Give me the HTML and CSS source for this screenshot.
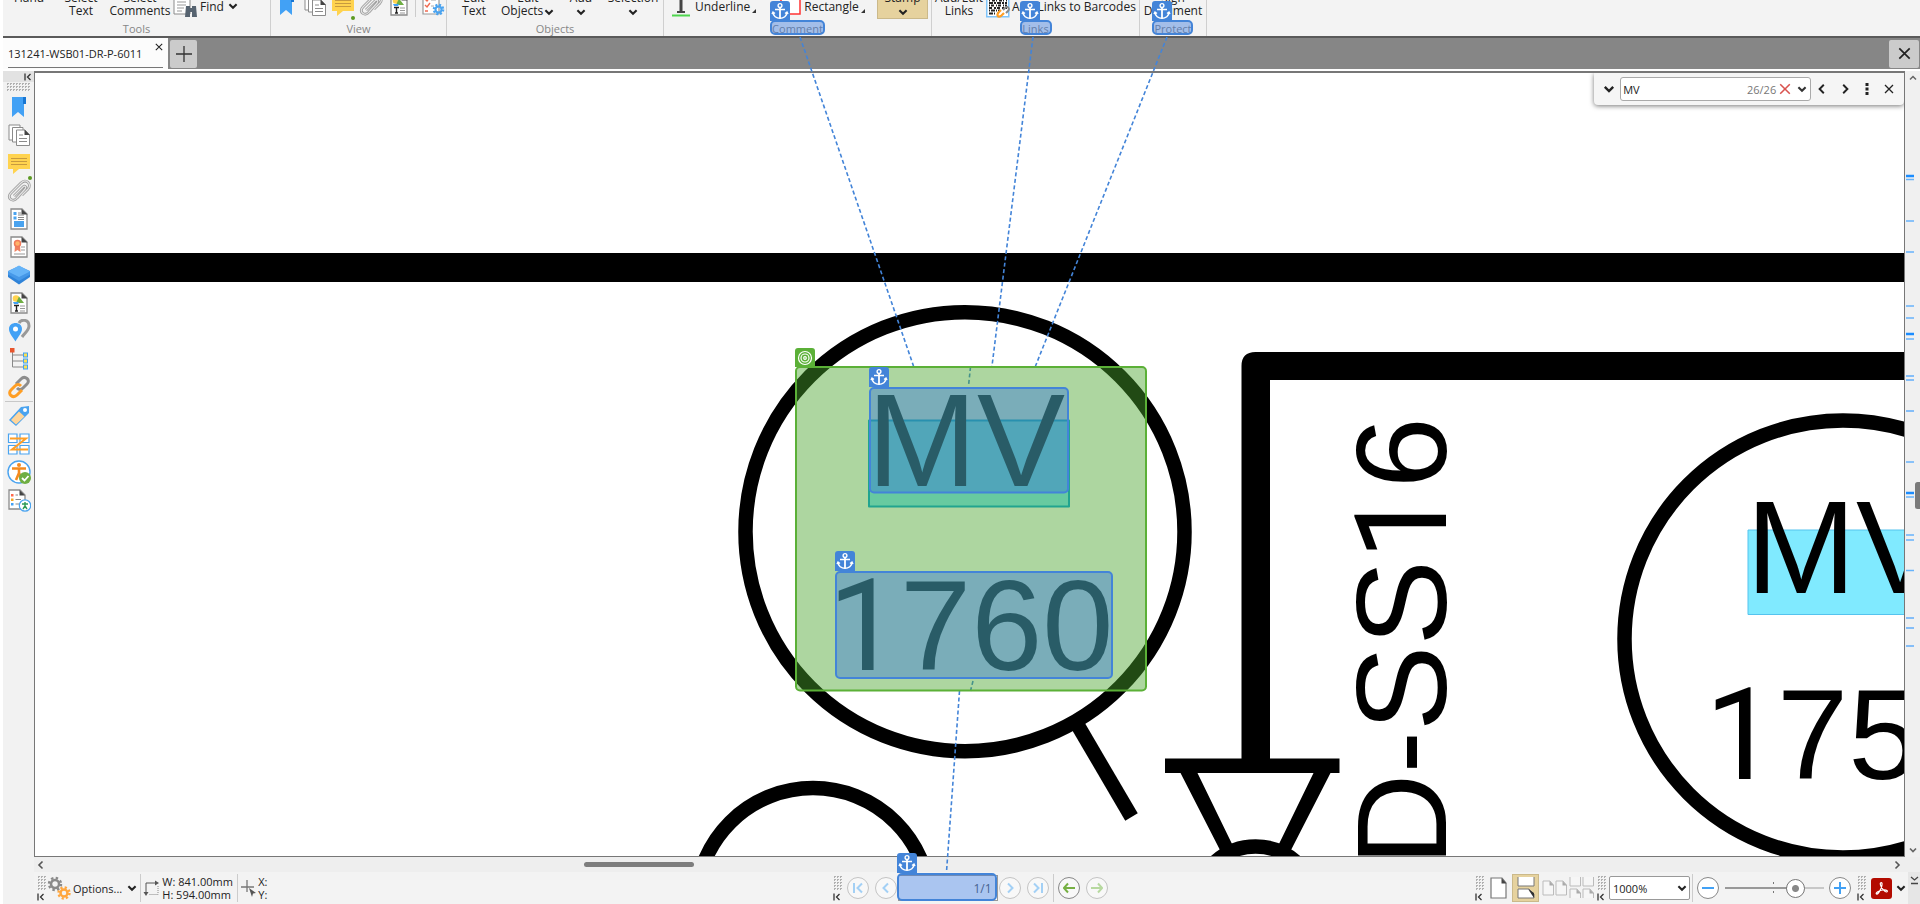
FILE: index.html
```html
<!DOCTYPE html>
<html lang="en">
<head>
<meta charset="utf-8">
<title>131241-WSB01-DR-P-6011</title>
<link rel="stylesheet" href="styles.css">
</head>
<body>
<svg class="defs" aria-hidden="true">
  <defs>
    <symbol id="chev-down" viewBox="0 0 10 10"><path d="M2 3.5 5 6.5 8 3.5" fill="none" stroke="currentColor" stroke-width="1.7"/></symbol>
    <symbol id="chev-up" viewBox="0 0 10 10"><path d="M2 6.500 5 3.500 8 6.500" fill="none" stroke="currentColor" stroke-width="1.5"/></symbol>
    <symbol id="chev-left" viewBox="0 0 10 10"><path d="M6.500 1.500 3 5 6.500 8.500" fill="none" stroke="currentColor" stroke-width="1.600"/></symbol>
    <symbol id="chev-right" viewBox="0 0 10 10"><path d="M3.500 1.500 7 5 3.500 8.500" fill="none" stroke="currentColor" stroke-width="1.600"/></symbol>
    <symbol id="cross" viewBox="0 0 10 10"><path d="M1 1 9 9M9 1 1 9" fill="none" stroke="currentColor" stroke-width="1.300"/></symbol>
    <symbol id="collapse" viewBox="0 0 8 8"><path d="M1 .5V7.500M6.500 1 3.500 4 6.500 7" fill="none" stroke="#333" stroke-width="1.300"/></symbol>
    <symbol id="i-bookmark" viewBox="0 0 24 24"><path d="M5 2H17V22L11 17 5 22Z" fill="#42a1f5"/><path d="M16 2H19V9H16Z" fill="#1976d2"/></symbol>
    <symbol id="i-pages" viewBox="0 0 24 24"><g fill="#fff" stroke="#8b8b8b"><path d="M2 2H13V17H2Z"/><path d="M5.500 4.500H16V19H5.500Z"/><path d="M9.500 7H18L22.500 12V22.500H9.500Z"/><path d="M12 12H16M12 15.500H20M12 18.500H20"/></g><path d="M17.500 6.500V12H23Z" fill="#444"/></symbol>
    <symbol id="i-note" viewBox="0 0 24 24"><path d="M1 3H23V18H12L6 23V18H1Z" fill="#ffd34f"/><path d="M4 7.500H20M4 10.500H20M4 13.500H20" stroke="#c79a3f" stroke-width="1"/></symbol>
    <symbol id="i-clip" viewBox="0 0 24 24"><path d="M7 17 16 8C17.500 6 20 8 18 10L10 19C6 24-1 19 4 14L14 4C19-1 25 5 21 10L15 16" fill="none" stroke="#999" stroke-width="2.800"/><path d="M7 17 16 8C17.500 6 20 8 18 10L10 19C6 24-1 19 4 14L14 4C19-1 25 5 21 10L15 16" fill="none" stroke="#e4e4e4" stroke-width="1.200"/></symbol>
    <symbol id="i-doc" viewBox="0 0 24 24"><path d="M4 2H15L20 7V22H4Z" fill="#fff" stroke="#8b8b8b" stroke-width="1.300"/><path d="M14.500 2V7.500H20.500Z" fill="#444"/></symbol>
    <symbol id="i-content" viewBox="0 0 24 24"><use href="#i-doc"/><path d="M6.500 5H9.500V8H6.500ZM6.500 9.500H9.500V12.500H6.500ZM7 14H17V20H7Z" fill="#4aa3ef"/><path d="M11 6H14M11 8H17M11 10.500H17M11 12.500H17" stroke="#888"/></symbol>
    <symbol id="i-cert" viewBox="0 0 24 24"><use href="#i-doc"/><path d="M8 10 7.500 17 10.500 15 13.500 17 13 10Z" fill="#f08060"/><circle cx="10.500" cy="8.500" r="3" fill="#ffb36b" stroke="#f07a5a" stroke-width="1.500"/><path d="M14 12H18M14 15H18M7 19H18" stroke="#999"/></symbol>
    <symbol id="i-layers" viewBox="0 0 24 24"><path d="M1 14 12 21.500 23 14V9L12 4 1 9Z" fill="#2f83d8"/><path d="M1 11.500 12 18 23 11.500V8L12 3 1 8Z" fill="#4698e8"/><path d="M1 8.500 12 2.500 23 8.500 12 14Z" fill="#66b4f8"/></symbol>
    <symbol id="i-textdoc" viewBox="0 0 24 24"><use href="#i-doc"/><circle cx="9" cy="7.500" r="3.300" fill="#ffd34f"/><path d="M12 5.500 17 12H9Z" fill="#6fae43"/><path d="M6 11H12L11 13H7Z" fill="#42a1f5"/><path d="M7 14.500H12M9.500 14.500V20M8 20H11" stroke="#222" stroke-width="1.400"/><path d="M13 15H18M13 17.500H18M13 20H18" stroke="#999"/></symbol>
    <symbol id="i-pin" viewBox="0 0 24 24"><path d="M12 4C14 0 22 0 22 7 22 11 18 14 15 18" fill="none" stroke="#999" stroke-width="3"/><path d="M8.500 22.500C5 17 2 14 2 10 2 2 15 2 15 10 15 14 11 18 8.500 22.500Z" fill="#42a1f5"/><circle cx="8.500" cy="10" r="2.500" fill="#fff"/></symbol>
    <symbol id="i-tree" viewBox="0 0 24 24"><path d="M5.500 5V20H17M5.500 8H17M5.500 14H17" fill="none" stroke="#888"/><rect x="3" y="1" width="4.500" height="4.500" fill="#e8552d"/><g fill="#ffe14f" stroke="#42a1f5"><rect x="16.500" y="6" width="4" height="4"/><rect x="16.500" y="12" width="4" height="4"/><rect x="16.500" y="18" width="4" height="4"/></g></symbol>
    <symbol id="i-chain" viewBox="0 0 24 24"><path d="M9 9 14 4C18 0 24 5 20 9L16 13C14 15 12 15 10 13" fill="none" stroke="#8d8d8d" stroke-width="3"/><path d="M15 15 10 20C6 24 0 19 4 15L8 11C10 9 12 9 14 11" fill="none" stroke="#ff9e24" stroke-width="3"/></symbol>
    <symbol id="i-tag" viewBox="0 0 24 24"><path d="M2 16 14 3 22 2 22 9 9 22Z" fill="#4aa3ef"/><path d="M4 16 12 7.500 17.500 12.500 9 20.500Z" fill="#ffd59a"/><circle cx="18" cy="6" r="2" fill="#fff"/></symbol>
    <symbol id="i-order" viewBox="0 0 24 24"><g fill="#fff" stroke="#4aa3ef" stroke-width="1.200"><path d="M1.500 2H10V10.500H1.500ZM13 2H22V10.500H13ZM1.500 13.500H10V22H1.500ZM13 13.500H22V22H13Z"/></g><path d="M3 6.500H19L5 17.500H21" fill="none" stroke="#ff9e24" stroke-width="2"/></symbol>
    <symbol id="i-access" viewBox="0 0 24 24"><circle cx="12" cy="12" r="11" fill="#fff" stroke="#4aa3ef" stroke-width="1.400"/><circle cx="12" cy="5" r="2" fill="#f58a1f"/><path d="M5 8.500H19M12 9V14M12 13 9 20M12 13 15 20" stroke="#f58a1f" stroke-width="2.600" fill="none"/><circle cx="18" cy="18" r="6" fill="#6fae43"/><path d="M15 18 17.500 20.500 21.500 16" fill="none" stroke="#fff" stroke-width="1.800"/></symbol>
    <symbol id="i-report" viewBox="0 0 24 24"><path d="M2 2H13L18 7V21H2Z" fill="#fff" stroke="#8b8b8b" stroke-width="1.300"/><path d="M12.500 2V7.500H18Z" fill="#444"/><path d="M4 6H6.500V8.500H4Z" fill="#ff6a4d"/><path d="M4 10.500H6.500V13H4Z" fill="#f5a623"/><path d="M4 15H6.500V17.500H4Z" fill="#42a1f5"/><path d="M8.500 7H11M8.500 11.500H14M8.500 16H12" stroke="#888"/><circle cx="18" cy="17.500" r="5.700" fill="#fff" stroke="#4aa3ef" stroke-width="1.200"/><path d="M15 16H21M18 14V18L16 21M18 18 20 21" stroke="#2d9a55" stroke-width="1.400" fill="none"/></symbol>
    <symbol id="i-gearlist" viewBox="0 0 24 24"><path d="M2 0H13L18 5V21H2Z" fill="#fff" stroke="#999" stroke-width="1.200"/><path d="M4 6 6 8 9 4M4 12 6 14 9 10M4 18H7" fill="none" stroke="#f06a50" stroke-width="1.400"/><path d="M10 7H15M10 13H13" stroke="#aaa"/><circle cx="17.500" cy="16.500" r="4.700" fill="none" stroke="#4aa3ef" stroke-width="2.200" stroke-dasharray="2 1.690"/><circle cx="17.500" cy="16.500" r="3" fill="none" stroke="#4aa3ef" stroke-width="2"/></symbol>
    <symbol id="i-find" viewBox="0 0 24 24"><path d="M1 0H12L17 5V20H1Z" fill="#fff" stroke="#8b8b8b"/><path d="M4 8H13M4 11H13M4 14H11M4 17H9" stroke="#999"/><path d="M13 12H17V14H19V12H23L24 23H19V18H17V23H12Z" fill="#566370"/></symbol>
    <symbol id="i-underline" viewBox="0 0 24 24"><path d="M5 1H19V6H17V3H13.500V17H16V19H8V17H10.500V3H7V6H5Z" fill="#444"/><path d="M3 21.500H21" stroke="#4fd64f" stroke-width="2"/></symbol>
    <symbol id="i-rect" viewBox="0 0 24 24"><path d="M3 1H22V20H3Z" fill="#fff" stroke="#f33" stroke-width="1.500"/></symbol>
    <symbol id="i-qr" viewBox="0 0 24 24"><rect x=".75" y=".75" width="22" height="22" fill="#fff" stroke="#7fc4fa" stroke-width="1.500"/><g stroke="#222" fill="none" stroke-width="2"><path d="M3 4H21" stroke-dasharray="3 1 1 2"/><path d="M3 6.500H21" stroke-dasharray="1 2 3 1"/><path d="M3 9H21" stroke-dasharray="4 1 2 1"/><path d="M3 11.500H21" stroke-dasharray="1 1 3 2"/><path d="M3 14H21" stroke-dasharray="3 2 2 1"/><path d="M3 16.500H14" stroke-dasharray="1 1 4 1"/><path d="M3 19.500H12" stroke-dasharray="4 1 1 2"/></g><path d="M17 16 20 13C22 12 24 15 22 17L20 19" fill="none" stroke="#888" stroke-width="2"/><path d="M18 19 15 22C12 24 10 21 13 18L15 16" fill="none" stroke="#ff9e24" stroke-width="2.200"/></symbol>
    <symbol id="i-gears" viewBox="0 0 24 24"><circle cx="8" cy="8" r="6" fill="none" stroke="#8a8a8a" stroke-width="2.400" stroke-dasharray="2.400 2.310"/><circle cx="8" cy="8" r="4" fill="none" stroke="#8a8a8a" stroke-width="2.500"/><circle cx="17" cy="17" r="5.500" fill="none" stroke="#ffa63d" stroke-width="2.400" stroke-dasharray="2.200 2.120"/><circle cx="17" cy="17" r="3.500" fill="none" stroke="#ffa63d" stroke-width="2.500"/></symbol>
    <symbol id="i-size" viewBox="0 0 18 18"><path d="M3 14V4H13" fill="none" stroke="#555"/><path d="M12 1.500 16 4 12 6.500ZM.5 13 3 17 5.500 13Z" fill="#555"/><path d="M15 7V15.500H6" fill="none" stroke="#888" stroke-dasharray="1 1"/></symbol>
    <symbol id="i-cursor" viewBox="0 0 18 18"><path d="M7 1V13M1 8H14" stroke="#777" stroke-width="1.300"/><path d="M9 9 16 14 13 14.500 12 18Z" fill="#555"/></symbol>
    <symbol id="v-single" viewBox="0 0 24 24"><path d="M4 2H15L19 7V22H4Z" fill="#fff" stroke="#777" stroke-width="1.200"/><path d="M14.500 2V7.500H19.500Z" fill="#444"/></symbol>
    <symbol id="v-cont" viewBox="0 0 24 24"><path d="M4 1V10H20V1" fill="#fff" stroke="#777"/><path d="M4 22V13H15L20 18V22Z" fill="#fff" stroke="#777"/><path d="M14 13 20 22V17Z" fill="#333"/></symbol>
    <symbol id="v-two" viewBox="0 0 26 24"><g fill="#f6f6f6" stroke="#bbb"><path d="M1 5H8L11.500 9V19H1Z"/><path d="M14 5H21L24.500 9V19H14Z"/></g><path d="M7.500 5V9.500H12ZM20.500 5V9.500H25Z" fill="#aaa"/></symbol>
    <symbol id="v-four" viewBox="0 0 26 24"><g fill="#f6f6f6" stroke="#bbb"><path d="M1 1V10H11.500V1M14 1V10H24.500V1M1 22V13H8L11.500 17V22M14 22V13H21L24.500 17V22"/></g><path d="M7.500 13V17.500H12ZM20.500 13V17.500H25Z" fill="#aaa"/></symbol>
    <symbol id="i-anchor" viewBox="0 0 20 20"><path d="M0 20V3Q0 0 3 0H17Q20 0 20 3V20Z" fill="#4384d8"/><g fill="none" stroke="#fff" stroke-width="1.400"><circle cx="10" cy="4.500" r="1.900"/><path d="M5 8.500H15M3 11C3 19.500 17 19.500 17 11M2 13 3 11 5 12.500M18 13 17 11 15 12.500"/><path d="M10 6.500V17.500" stroke-width="1.800"/></g></symbol>
  </defs>
</svg>

<div class="app">
  <header class="ribbon">
    <section class="group g-tools">
      <div class="items">
        <button class="big w-52">Hand<br>&nbsp;</button>
        <button class="big w-52">Select<br>Text</button>
        <button class="big w-66">Select<br>Comments</button>
        <button class="inline"><svg class="ic"><use href="#i-find"/></svg>Find<svg class="chev"><use href="#chev-down"/></svg></button>
      </div>
      <h2>Tools</h2>
    </section>
    <section class="group g-view">
      <div class="items icons">
        <button class="icon" aria-label="Bookmarks"><svg class="ic"><use href="#i-bookmark"/></svg></button>
        <button class="icon" aria-label="Thumbnails"><svg class="ic"><use href="#i-pages"/></svg></button>
        <button class="icon dot" aria-label="Comments"><svg class="ic"><use href="#i-note"/></svg></button>
        <button class="icon" aria-label="Attachments"><svg class="ic"><use href="#i-clip"/></svg></button>
        <button class="icon" aria-label="Content"><svg class="ic"><use href="#i-textdoc"/></svg></button>
        <button class="icon split" aria-label="Panes"><svg class="ic"><use href="#i-gearlist"/></svg></button>
      </div>
      <h2>View</h2>
    </section>
    <section class="group g-objects">
      <div class="items">
        <button class="big w-54">Edit<br>Text</button>
        <button class="big w-54">Edit<br>Objects<svg class="chev"><use href="#chev-down"/></svg></button>
        <button class="big w-52">Add<br><svg class="chev"><use href="#chev-down"/></svg></button>
        <button class="big w-52">Selection<br><svg class="chev"><use href="#chev-down"/></svg></button>
      </div>
      <h2>Objects</h2>
    </section>
    <section class="group g-comment">
      <div class="items">
        <button class="inline"><svg class="ic"><use href="#i-underline"/></svg>Underline<i class="tick"></i></button>
        <button class="inline rect"><svg class="ic"><use href="#i-rect"/></svg>Rectangle<i class="tick"></i></button>
        <button class="big stamp">Stamp<br><svg class="chev"><use href="#chev-down"/></svg></button>
      </div>
      <h2>Comment</h2>
    </section>
    <section class="group g-links">
      <div class="items">
        <button class="big w-54">Add/Edit<br>Links</button>
        <button class="inline"><svg class="ic"><use href="#i-qr"/></svg>Add Links to Barcodes</button>
      </div>
      <h2>Links</h2>
    </section>
    <section class="group g-protect">
      <div class="items"><button class="big w-66">Sign<br>Document</button></div>
      <h2>Protect</h2>
    </section>
  </header>

  <nav class="tabs">
    <div class="tab"><a href="#drawing">131241-WSB01-DR-P-6011</a><button aria-label="Close tab"><svg class="s8"><use href="#cross"/></svg></button></div>
    <button class="sq add" aria-label="New tab"><svg viewBox="0 0 16 16" width="16" height="16"><path d="M8 0V16M0 8H16" stroke="#333" stroke-width="1.300"/></svg></button>
    <button class="sq close" aria-label="Close"><svg width="13" height="13"><use href="#cross"/></svg></button>
  </nav>

  <div class="body">
    <aside class="side">
      <div class="side-head"><svg class="fold"><use href="#collapse"/></svg></div>
      <div class="grip-h"></div>
      <button aria-label="Bookmarks"><svg class="ic"><use href="#i-bookmark"/></svg></button>
      <button aria-label="Thumbnails"><svg class="ic"><use href="#i-pages"/></svg></button>
      <button class="dot" aria-label="Comments"><svg class="ic"><use href="#i-note"/></svg></button>
      <button aria-label="Attachments"><svg class="ic"><use href="#i-clip"/></svg></button>
      <button aria-label="Fields"><svg class="ic"><use href="#i-content"/></svg></button>
      <button aria-label="Signatures"><svg class="ic"><use href="#i-cert"/></svg></button>
      <button aria-label="Layers"><svg class="ic"><use href="#i-layers"/></svg></button>
      <button aria-label="Content"><svg class="ic"><use href="#i-textdoc"/></svg></button>
      <button aria-label="Destinations"><svg class="ic"><use href="#i-pin"/></svg></button>
      <button aria-label="Structure"><svg class="ic"><use href="#i-tree"/></svg></button>
      <button aria-label="Links"><svg class="ic"><use href="#i-chain"/></svg></button>
      <hr>
      <button aria-label="Tags"><svg class="ic"><use href="#i-tag"/></svg></button>
      <button aria-label="Order"><svg class="ic"><use href="#i-order"/></svg></button>
      <button aria-label="Accessibility"><svg class="ic"><use href="#i-access"/></svg></button>
      <button aria-label="Report"><svg class="ic"><use href="#i-report"/></svg></button>
    </aside>

    <div class="work">
      <div class="view">
        <main class="canvas" id="drawing">
          <svg class="sheet" viewBox="35 73 1869 783" preserveAspectRatio="xMinYMin slice">
            <rect x="34" y="253" width="1900" height="29"/>
            <path d="M1241.500 765V366Q1241.500 352 1255.500 352H1920V380H1270V765Z"/>
            <path d="M1165 758.500H1339.500V773H1165Z"/>
            <path d="M1180 772H1197L1233 846 1221 852ZM1331 772H1314L1278 846 1290 852Z"/>
            <g class="ring">
              <circle cx="965" cy="531.700" r="219.500"/>
              <circle cx="1843" cy="639" r="218.500"/>
              <circle cx="813" cy="905" r="117"/>
              <circle cx="1255.600" cy="907" r="60.500"/>
              <path d="M1077 724 1131.500 817"/>
            </g>
            <path d="M1686 783 1692 788V794H1698L1690 802Z"/>
            <path class="hit current" d="M869 420.500H1069V506.500H869Z"/>
            <path class="hit" d="M1748 530H1925V614.500H1748Z"/>
            <text class="cad" x="867" y="485.500">MV</text>
            <text class="cad num" x="828" y="670"><tspan class="one">1</tspan>760</text>
            <text class="cad" x="1746" y="593">MV</text>
            <text class="cad num" x="1705" y="779"><tspan class="one">1</tspan>75</text>
            <text class="cad num" transform="translate(1446 866) rotate(-90)">D-SS<tspan class="one">1</tspan>6</text>
          </svg>
          <form class="search">
            <button type="button" aria-label="Options"><svg class="s14"><use href="#chev-down"/></svg></button>
            <div class="field">
              <input type="text" aria-label="Find" value="MV"><span>26/26</span>
              <button type="button" class="red" aria-label="Clear"><svg class="s12"><use href="#cross"/></svg></button>
              <button type="button" class="drop" aria-label="History"><svg class="s12"><use href="#chev-down"/></svg></button>
            </div>
            <button type="button" aria-label="Previous"><svg class="s12"><use href="#chev-left"/></svg></button>
            <button type="button" aria-label="Next"><svg class="s12"><use href="#chev-right"/></svg></button>
            <button type="button" aria-label="More"><svg viewBox="0 0 4 12" width="4" height="12"><path d="M.5 0H3.500V3H.5ZM.5 4.500H3.500V7.500H.5ZM.5 9H3.500V12H.5Z" fill="#222"/></svg></button>
            <button type="button" aria-label="Close find"><svg class="s10"><use href="#cross"/></svg></button>
          </form>
        </main>
        <div class="vbar">
          <svg class="s10"><use href="#chev-up"/></svg>
          <svg class="marks" width="15" height="580" viewBox="0 83 15 580">
            <path class="m-soft" d="M1 179.500H9M1 221H9M1 252H9M1 306H9M1 318H9M1 339H9M1 462H9M1 497H9M1 535H9M1 540H9M1 570.500H9"/>
            <path class="m-hard" d="M1 376H9M1 380H9M1 411H9M1 618H9M1 628H9M1 646H9"/>
            <path class="m-bold" d="M1 176H9M1 334H9M1 493H9"/>
            <rect x="10" y="482" width="8" height="27" rx="2.500" fill="#7a7a7a"/>
          </svg>
          <svg class="s10 end"><use href="#chev-down"/></svg>
        </div>
      </div>
      <div class="hbar">
        <svg class="s10"><use href="#chev-left"/></svg>
        <div class="track"><i></i></div>
        <svg class="s10"><use href="#chev-right"/></svg>
      </div>
      <footer class="status">
        <div class="bar left">
          <div class="grip"><svg class="fold"><use href="#collapse"/></svg></div>
          <button class="options"><svg class="ic"><use href="#i-gears"/></svg>Options...<svg class="chev gap-l"><use href="#chev-down"/></svg></button>
          <i class="sep"></i>
          <svg width="18" height="18"><use href="#i-size"/></svg>
          <p class="dims">W: 841.00mm<br>H: 594.00mm</p>
          <i class="sep"></i>
          <svg class="cur" width="18" height="18"><use href="#i-cursor"/></svg>
          <p>X:<br>Y:</p>
        </div>
        <div class="bar mid">
          <div class="grip"><svg class="fold"><use href="#collapse"/></svg></div>
          <button class="round" aria-label="First page"><svg viewBox="0 0 12 12"><path d="M2 1V11M10 1.500 5.500 6 10 10.500"/></svg></button>
          <button class="round" aria-label="Previous page"><svg viewBox="0 0 12 12"><path d="M8 1.500 3.500 6 8 10.500"/></svg></button>
          <input class="page" type="text" aria-label="Page" value="1/1">
          <button class="round" aria-label="Next page"><svg viewBox="0 0 12 12"><path d="M4 1.500 8.500 6 4 10.500"/></svg></button>
          <button class="round" aria-label="Last page"><svg viewBox="0 0 12 12"><path d="M10 1V11M2 1.500 6.500 6 2 10.500"/></svg></button>
          <i class="sep"></i>
          <button class="round back" aria-label="Back"><svg viewBox="0 0 12 12"><path d="M12 6H1M5 1.500 .8 6 5 10.500"/></svg></button>
          <button class="round fwd" aria-label="Forward"><svg viewBox="0 0 12 12"><path d="M0 6H11M7 1.500 11.200 6 7 10.500"/></svg></button>
        </div>
        <div class="bar right">
          <div class="grip"><svg class="fold"><use href="#collapse"/></svg></div>
          <button class="lay" aria-label="Single page"><svg class="ic"><use href="#v-single"/></svg></button>
          <button class="lay on" aria-label="Continuous"><svg class="ic"><use href="#v-cont"/></svg></button>
          <button class="lay" aria-label="Two pages"><svg width="26" height="24"><use href="#v-two"/></svg></button>
          <button class="lay" aria-label="Two pages continuous"><svg width="26" height="24"><use href="#v-four"/></svg></button>
          <div class="grip"><svg class="fold"><use href="#collapse"/></svg></div>
          <div class="zoom"><select aria-label="Zoom"><option>1000%</option></select><svg class="s12"><use href="#chev-down"/></svg></div>
          <i class="sep"></i>
          <button class="round zoomer" aria-label="Zoom out"><svg viewBox="0 0 12 12"><path d="M0 6H12"/></svg></button>
          <input class="slider" type="range" min="0" max="100" value="76" aria-label="Zoom level">
          <button class="round zoomer" aria-label="Zoom in"><svg viewBox="0 0 12 12"><path d="M0 6H12M6 0V12"/></svg></button>
          <div class="grip"><svg class="fold"><use href="#collapse"/></svg></div>
          <button class="pdf" aria-label="PDF"><svg viewBox="0 0 21 21" width="21" height="21"><rect width="21" height="21" rx="3" fill="#b30b00"/><path d="M9.500 5C11.500 3.500 11.500 7 10 10.500 8.500 14 6.500 16.500 5.500 16 4 15 8 12.500 12 12 16 11.500 17 13 16 13.800 14.500 14.800 10 10 9.500 7 9.200 6 9.200 5.300 9.500 5Z" fill="none" stroke="#fff" stroke-width="1.200"/></svg></button>
          <svg class="chev"><use href="#chev-down"/></svg>
          <button class="more" aria-label="More"><svg viewBox="0 0 9 9" width="9" height="9"><path d="M1 1 4.500 4 8 1M1 7.500H8" fill="none" stroke="#444" stroke-width="1.300"/></svg></button>
        </div>
      </footer>
    </div>
  </div>

  <svg class="overlay" width="1920" height="904" viewBox="0 0 1920 904" aria-hidden="true">
    <path class="wire" d="M800 37 913.500 366M1033 37 992 366M1167 37 1035.500 366M970.500 367 968.500 386M973 681 970.500 691M959.500 691 946.500 872"/>
    <rect class="target" x="796" y="367" width="350" height="323.500" rx="4"/>
    <path d="M795 367V351Q795 348 798 348H812Q815 348 815 351V367Z" fill="#5bb037"/>
    <g fill="none" stroke="#fff" stroke-width="1.200"><circle cx="805" cy="358" r="6.500"/><circle cx="805" cy="358" r="4"/><circle cx="805" cy="358" r="1.300"/></g>
    <g class="source">
      <rect x="870" y="388" width="198" height="104.500" rx="4"/>
      <rect x="836" y="572" width="276" height="106" rx="4"/>
      <rect x="771" y="21" width="53" height="13" rx="4"/>
      <rect x="1021" y="21" width="30" height="13" rx="4"/>
      <rect x="1153" y="21" width="39" height="13" rx="4"/>
      <rect x="898" y="874" width="98" height="26" rx="4"/>
    </g>
    <use href="#i-anchor" x="869" y="367" width="20" height="20"/>
    <use href="#i-anchor" x="835" y="551" width="20" height="20"/>
    <use href="#i-anchor" x="770" y="1" width="20" height="20"/>
    <use href="#i-anchor" x="1020" y="1" width="20" height="20"/>
    <use href="#i-anchor" x="1152" y="1" width="20" height="20"/>
    <use href="#i-anchor" x="897" y="853" width="20" height="20"/>
  </svg>
</div>
</body>
</html>
```
FILE: styles.css
```css
* { box-sizing: border-box; }
body { margin: 0; overflow: hidden; font: 12px/13px "Segoe UI", "Open Sans", sans-serif; color: #222; background: #fff; }
button { border: 0; padding: 0; margin: 0; background: none; font: inherit; color: inherit; display: flex; align-items: center; justify-content: center; }
svg { display: block; flex: none; }
p, h2 { margin: 0; }
.defs { position: absolute; width: 0; height: 0; }
.app { position: relative; height: 100vh; padding-left: 3px; display: flex; flex-direction: column; }
.ic { width: 24px; height: 24px; }
.chev { width: 12px; height: 12px; }
.gap-l { margin-left: 2px; }
.s8 { width: 8px; height: 8px; }
.s10 { width: 10px; height: 10px; }
.s12 { width: 12px; height: 12px; }
.s14 { width: 14px; height: 14px; }
.fold { width: 8px; height: 8px; }
.dot { position: relative; }
.dot::after { content: ""; position: absolute; right: 0; bottom: -3px; width: 4px; height: 4px; border-radius: 50%; background: #5c9a22; }

/* Ribbon */
.ribbon { height: 36px; flex: none; display: flex; background: #f3f3f3; overflow: hidden; }
.group { display: flex; flex-direction: column; justify-content: flex-end; border-right: 1px solid #cfcfcf; }
.group h2 { height: 15px; font-size: 11px; line-height: 15px; font-weight: 400; color: #868686; text-align: center; }
.items { display: flex; align-items: flex-end; padding-bottom: 4px; }
.big { display: block; flex: none; height: 26px; text-align: center; white-space: nowrap; }
.big .chev { display: inline-block; vertical-align: -3px; }
.inline { height: 22px; gap: 3px; white-space: nowrap; }
.icon { width: 24px; height: 24px; }
.icons { gap: 4px; padding-left: 4px; }
.split { width: 32px; padding-left: 4px; border-left: 1px solid #ccc; }
.w-52 { width: 52px; }
.w-54 { width: 54px; }
.w-66 { width: 66px; }
.g-tools { width: 268px; }
.g-view { width: 176px; }
.g-objects { width: 217px; }
.g-comment { width: 268px; }
.g-links { width: 208px; }
.g-protect { width: 67px; }
.g-comment .items { padding-left: 5px; }
.g-comment .inline { gap: 2px; }
.g-links .inline { gap: 2px; }
.tick { align-self: flex-end; margin-bottom: 4px; border: 2px solid #333; border-top-color: transparent; border-left-color: transparent; }
.rect { margin-left: 22px; }
.stamp { width: 51px; height: 30px; margin: 0 0 -2px auto; background: #e6d29e; border: 1px solid #cbb98a; }
.g-comment .stamp { margin-right: 3px; }

/* Document tabs */
.tabs { height: 35px; flex: none; display: flex; align-items: center; border-top: 2px solid #5a5a5a; border-bottom: 2px solid #fff; padding-right: 1px; background: #868686; }
.tab { width: 165px; height: 100%; display: flex; align-items: center; padding: 0 5px; background: #fcfcfc; position: relative; }
.tab::after { content: ""; position: absolute; left: 5px; right: 5px; bottom: 1px; height: 1px; background: #777; }
.tab a { color: #222; font-size: 11px; text-decoration: none; white-space: nowrap; }
.tab button { margin: 0 0 13px auto; }
.sq { height: 28px; background: #cbcbcb; border-radius: 2px; }
.add { width: 27px; margin-left: 2px; }
.close { width: 30px; margin-left: auto; }

/* Workspace */
.body { flex: 1; min-height: 0; display: flex; }
.side { width: 31px; flex: none; background: #f2f2f2; display: flex; flex-direction: column; }
.side button { height: 28px; }
.side .dot::after { right: 2px; }
.side hr { width: 28px; height: 1px; margin: 0 auto; border: 0; background: #c8c8c8; }
.side-head { height: 11px; flex: none; display: flex; justify-content: flex-end; align-items: center; padding-right: 2px; background: #e2e2e2; }
.grip-h, .grip::before { background: conic-gradient(#b0b0b0 25%, transparent 0) 0 0 / 3px 3px; }
.grip-h { height: 9px; margin: 1px 3px; flex: none; }
.work { flex: 1; min-width: 0; display: flex; flex-direction: column; }
.view { flex: 1; min-height: 0; display: flex; background: #f0f0f0; }
.canvas { flex: 1; min-width: 0; position: relative; overflow: hidden; background: #fff; border: 1px solid #777; border-top-width: 2px; }
.sheet { width: 100%; height: 100%; }
.ring { fill: none; stroke: #000; stroke-width: 14.5px; }
.cad { font-family: Arial, "Liberation Sans", sans-serif; font-size: 132px; }
.num { font-size: 128px; }
.one { font-family: Roboto, sans-serif; }
.hit { fill: #80eaff; stroke: #55c3ee; stroke-width: 1px; }
.current { stroke: #00a5e0; stroke-width: 2px; stroke-linejoin: round; }

.search { position: absolute; top: 0; right: 0; width: 310px; height: 32px; display: flex; align-items: center; justify-content: space-between; padding: 0 4px; background: #f5f5f5; border-radius: 0 0 4px 4px; box-shadow: 0 1px 5px #777; }
.search > button { width: 22px; height: 22px; }
.field { width: 191px; height: 24px; display: flex; align-items: center; background: #fff; border: 1px solid #aaa; border-radius: 3px; color: #777; }
.field input { flex: 1; min-width: 0; border: 0; padding: 0 2px; font: inherit; font-size: 11px; color: #222; background: none; outline: 0; }
.field span { font-size: 11px; }
.field .red { width: 17px; color: #d9534f; }
.field .drop { width: 17px; color: #333; }

.vbar { width: 15px; flex: none; display: flex; flex-direction: column; align-items: center; padding: 2px 0; background: #f0f0f0; color: #666; }
.vbar .end { margin-top: auto; }
.m-soft { stroke: #67b3fb; stroke-width: 1.5px; }
.m-hard { stroke: #1a8cff; stroke-width: 1.2px; }
.m-bold { stroke: #1a8cff; stroke-width: 2.5px; }
.hbar { height: 15px; flex: none; display: flex; align-items: center; padding: 0 18px 0 2px; background: #eee; color: #555; }
.track { flex: 1; margin: 0 7px; }
.track i { display: block; width: 6%; height: 5px; margin-left: 29%; border-radius: 3px; background: #7d7d7d; }

/* Status bar */
.status { height: 32px; flex: none; display: grid; grid-template-columns: 1fr auto 1fr; background: #f3f3f3; }
.bar { display: flex; align-items: center; }
.right { justify-content: flex-end; }
.grip { width: 10px; height: 25px; display: flex; flex-direction: column; align-items: flex-start; justify-content: space-between; }
.grip::before { content: ""; width: 9px; height: 15px; }
.left { padding-left: 3px; font-size: 11px; }
.options { gap: 2px; }
.sep { width: 1px; height: 28px; background: #ccc; margin: 0 2px; }
.dims { width: 73px; margin-left: 1px; white-space: nowrap; }
.round { width: 22px; height: 22px; border: 1px solid #c4c4c4; border-radius: 50%; background: #f8f8f8; }
.round svg { width: 12px; height: 12px; fill: none; stroke: #a3d0f5; stroke-width: 2px; }
.mid { gap: 6px; padding-right: 14px; }
.mid .grip { margin-right: -2px; }
.mid .sep { margin: 0 -2px; }
.page { width: 100px; height: 26px; margin: 0 -5px 0 -5px; padding: 0 5px; border: 1px solid #999; background: #fff; text-align: right; font: inherit; color: #555; }
.mid .back { border-color: #888; }
.back svg { stroke: #76b043; }
.fwd svg { stroke: #b7d9a0; }
.lay { width: 27px; height: 28px; }
.on { background: #e6d29e; border: 1px solid #cbb98a; margin-right: 2px; }
.right .lay + .grip { margin: 0 2px; }
.zoom { position: relative; width: 81px; height: 24px; }
.zoom select { width: 100%; height: 100%; appearance: none; border: 1px solid #999; border-radius: 2px; padding: 0 3px; background: #fff; font: inherit; font-size: 11px; color: #222; }
.zoom svg { position: absolute; right: 2px; top: 6px; }
.right .sep { margin: 0 4px 0 2px; }
.round.zoomer { border-color: #888; background: #fff; }
.zoomer svg { stroke: #42a1f5; }
.slider { width: 99px; height: 22px; margin: 0 5px 0 6px; appearance: none; background: linear-gradient(#777, #777) 48px 5px / 1px 2px no-repeat, linear-gradient(#777, #777) 48px 14px / 1px 2px no-repeat, linear-gradient(to right, #999 65px, #c8c8c8 65px) 0 50% / 100% 2px no-repeat; }
.slider::-webkit-slider-thumb { appearance: none; width: 19px; height: 19px; border: 1px solid #777; border-radius: 50%; background: radial-gradient(circle, #888 3px, #fff 4px); }
.round + .grip { margin: 0 4px 0 6px; }
.right > .chev { margin: 0 1px 0 3px; }
.more { width: 12px; height: 32px; background: #e6e6e6; align-items: flex-start; padding-top: 4px; }

/* Link annotations over the workspace */
.overlay { position: absolute; left: 0; top: 0; pointer-events: none; }
.wire { fill: none; stroke: #4384d8; stroke-width: 1.600px; stroke-dasharray: 4 2.500; }
.target { fill: rgba(74, 164, 45, .45); stroke: #5bb037; stroke-width: 2px; }
.source rect { fill: rgba(52, 116, 220, .42); stroke: #4384d8; stroke-width: 2px; }
```
